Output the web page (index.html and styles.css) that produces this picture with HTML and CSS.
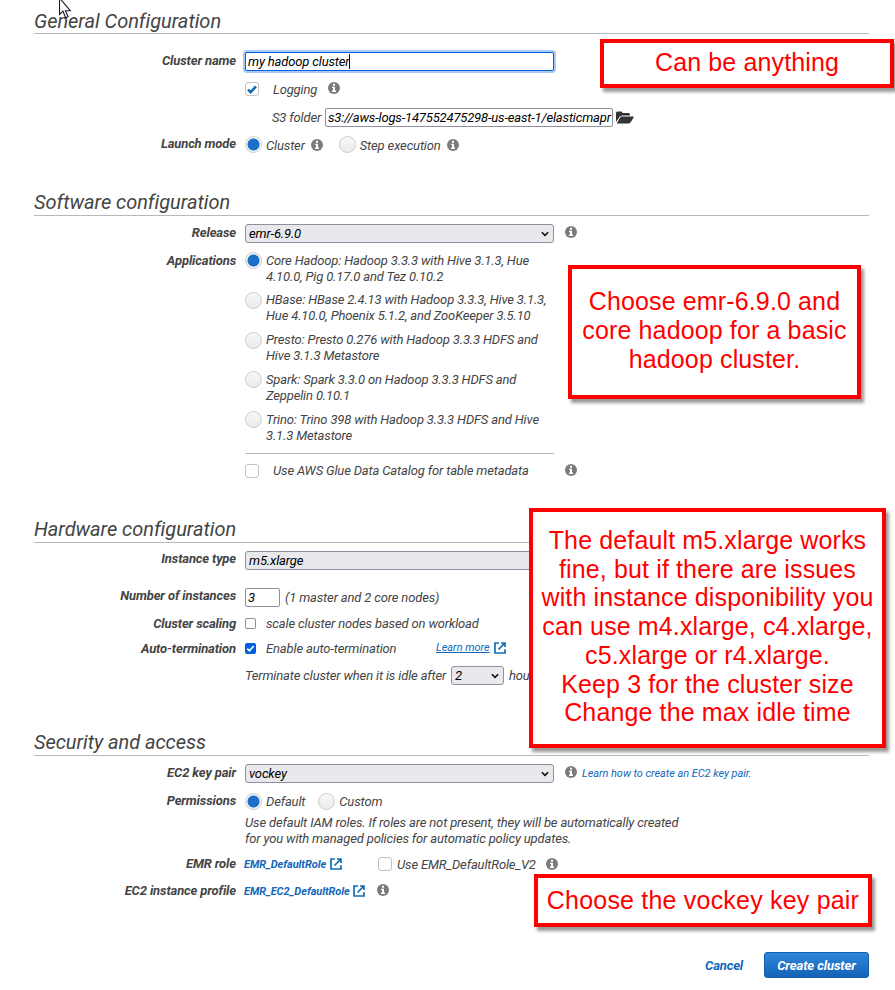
FILE: index.html
```
<!DOCTYPE html>
<html lang="en">
<head>
<meta charset="utf-8">
<title>Create Cluster</title>
<link rel="stylesheet" href="styles.css">
</head>
<body>
<svg class="defs" width="0" height="0">
  <symbol id="info" viewBox="0 0 12 12"><circle cx="6" cy="6" r="6" fill="#7b7b7b"/><path d="M5 1.8h2v1.9H5zM4 4.700h3v3.700h1v1.500H4V8.400h1V6H4z" fill="#fff"/></symbol>
  <symbol id="ext" viewBox="0 0 12 12"><path d="M5 1H1v10h10V7.300M7 1h4v4M10.800 1.200L4.500 7.500" fill="none" stroke="#146eb4" stroke-width="1.7"/></symbol>
  <symbol id="chev" viewBox="0 0 8 6"><path d="M.8 1.200L4 4.400l3.200-3.200" fill="none" stroke="#111" stroke-width="1.600"/></symbol>
</svg>
<main class="page">
  <section>
    <h2 class="first">General Configuration</h2>
    <div class="row r-name"><label class="up">Cluster name</label><div class="field"><div class="input wide focused">my hadoop cluster<i class="caret"></i></div></div></div>
    <div class="row short"><label></label><div class="field"><span class="check"><svg width="10" height="9" viewBox="0 0 10 9"><path d="M1 4.600l2.600 2.600L9 1.400" fill="none" stroke="#146eb4" stroke-width="2.600"/></svg></span><span class="check-text">Logging</span><svg class="info info-log"><use href="#info"/></svg></div></div>
    <div class="row r-s3"><label></label><div class="field"><span class="s3-text">S3 folder</span><div class="input s3-input">s3://aws-logs-147552475298-us-east-1/elasticmapr</div><svg class="folder" viewBox="0 0 18 13"><path d="M0 11V2Q0 .5 1.500.5h3.700Q6.500.5 6.500 2h6Q14 2 14 3.500v1H6.200Q4.500 4.500 3.500 6z" fill="#333"/><path d="M.7 12.500L4.200 6.600Q4.800 5.600 6 5.600h11q1.300 0 .5 1.100l-3 4.700q-.7 1.100-2 1.100z" fill="#333"/></svg></div></div>
    <div class="row r-launch"><label class="up">Launch mode</label><div class="field"><span class="radio on"></span><span class="radio-text">Cluster</span><svg class="info after"><use href="#info"/></svg><span class="radio second-launch"></span><span class="radio-text">Step execution</span><svg class="info after"><use href="#info"/></svg></div></div>
  </section>
  <section class="software">
    <h2>Software configuration</h2>
    <div class="row r-select"><label class="up">Release</label><div class="field"><div class="select wide">emr-6.9.0<svg class="chev"><use href="#chev"/></svg></div><svg class="info far"><use href="#info"/></svg></div></div>
    <div class="row r-apps"><label>Applications</label>
      <div class="apps">
        <div class="app"><span class="radio on"></span><span class="app-text">Core Hadoop: Hadoop 3.3.3 with Hive 3.1.3, Hue<br>4.10.0, Pig 0.17.0 and Tez 0.10.2</span></div>
        <div class="app"><span class="radio"></span><span class="app-text">HBase: HBase 2.4.13 with Hadoop 3.3.3, Hive 3.1.3,<br>Hue 4.10.0, Phoenix 5.1.2, and ZooKeeper 3.5.10</span></div>
        <div class="app"><span class="radio"></span><span class="app-text">Presto: Presto 0.276 with Hadoop 3.3.3 HDFS and<br>Hive 3.1.3 Metastore</span></div>
        <div class="app"><span class="radio"></span><span class="app-text">Spark: Spark 3.3.0 on Hadoop 3.3.3 HDFS and<br>Zeppelin 0.10.1</span></div>
        <div class="app"><span class="radio"></span><span class="app-text">Trino: Trino 398 with Hadoop 3.3.3 HDFS and Hive<br>3.1.3 Metastore</span></div>
      </div>
    </div>
    <div class="row short glue"><label></label><div class="field"><span class="check"></span><span class="check-text glue-text">Use AWS Glue Data Catalog for table metadata</span><svg class="info far-glue"><use href="#info"/></svg></div></div>
  </section>
  <section class="hardware">
    <h2>Hardware configuration</h2>
    <div class="row r-select"><label class="up more-up">Instance type</label><div class="field"><div class="select wide">m5.xlarge<svg class="chev"><use href="#chev"/></svg></div></div></div>
    <div class="row r-count"><label class="up more-up">Number of instances</label><div class="field"><div class="input count">3</div><span class="count-text">(1 master and 2 core nodes)</span></div></div>
    <div class="row r-scale"><label>Cluster scaling</label><div class="field"><span class="box"></span><span class="box-text">scale cluster nodes based on workload</span></div></div>
    <div class="row r-auto"><label>Auto-termination</label><div class="field"><span class="box on"><svg width="11" height="11" viewBox="0 0 11 11"><path d="M2.300 5.600l2.200 2.200 4.200-4.800" fill="none" stroke="#fff" stroke-width="1.700"/></svg></span><span class="box-text auto-text">Enable auto-termination</span><a class="more">Learn more</a><svg class="ext up"><use href="#ext"/></svg></div></div>
    <div class="row r-idle"><label></label><div class="field"><span class="idle-text">Terminate cluster when it is idle after</span><div class="select hours">2<svg class="chev"><use href="#chev"/></svg></div><span class="hours-text">hours</span></div></div>
  </section>
  <section class="security">
    <h2>Security and access</h2>
    <div class="row r-select"><label class="up">EC2 key pair</label><div class="field"><div class="select wide">vockey<svg class="chev"><use href="#chev"/></svg></div><svg class="info far"><use href="#info"/></svg><a class="small key-link">Learn how to create an EC2 key pair.</a></div></div>
    <div class="row r-perm"><label class="up">Permissions</label><div class="field"><span class="radio on"></span><span class="radio-text perm-text">Default</span><span class="radio second-perm"></span><span class="radio-text perm-text">Custom</span></div></div>
    <div class="row r-note"><label></label><div class="note">Use default IAM roles. If roles are not present, they will be automatically created<br>for you with managed policies for automatic policy updates.</div></div>
    <div class="row short r-role"><label>EMR role</label><div class="field"><a class="small strong role-link">EMR_DefaultRole</a><svg class="ext"><use href="#ext"/></svg><span class="check v2"></span><span class="v2-text">Use EMR_DefaultRole_V2</span><svg class="info v2-info"><use href="#info"/></svg></div></div>
    <div class="row short r-role"><label>EC2 instance profile</label><div class="field"><a class="small strong profile-link">EMR_EC2_DefaultRole</a><svg class="ext"><use href="#ext"/></svg><svg class="info profile-info"><use href="#info"/></svg></div></div>
  </section>
  <footer><a class="cancel">Cancel</a><button>Create cluster</button></footer>
</main>
<aside class="callout c-name">Can be anything</aside>
<aside class="callout c-release">Choose emr-6.9.0 and<br>core hadoop for a basic<br>hadoop cluster.</aside>
<aside class="callout c-hardware">The default m5.xlarge works<br>fine, but if there are issues<br>with instance disponibility you<br>can use m4.xlarge, c4.xlarge,<br>c5.xlarge or r4.xlarge.<br>Keep 3 for the cluster size<br>Change the max idle time</aside>
<aside class="callout c-key">Choose the vockey key pair</aside>
<svg class="cursor" width="13" height="20" viewBox="0 0 13 20"><path d="M.5-2v16.500l3.500-3.300 2.600 6.500 2.500-1-2.600-6h4.800z" fill="#fff" stroke="#111827" stroke-width="1.100"/></svg>
</body>
</html>
```
FILE: styles.css
```
* { box-sizing: border-box; }
body {
  margin: 0;
  width: 895px;
  height: 990px;
  position: relative;
  overflow: hidden;
  background: #fff;
  color: #444;
  font: italic 13px/16px Roboto, "Liberation Sans", sans-serif;
  letter-spacing: -.15px;
  white-space: nowrap;
}
svg { display: block; flex: none; }
.defs { position: absolute; }
.page { padding: 0 26px 0 34px; }
h2 {
  margin: 0;
  height: 34px;
  padding-top: 8px;
  border-bottom: 1px solid #b8b8b8;
  font-size: 20px;
  line-height: 25px;
  font-weight: 400;
  letter-spacing: -.04px;
}
h2.first { padding-top: 9px; line-height: 24px; }
.software { margin-top: 27px; }
.hardware { margin-top: 28px; }
.security { margin-top: 36px; }
.row {
  display: grid;
  grid-template-columns: 202px 1fr;
  column-gap: 9px;
  align-items: center;
  height: 21px;
}
.row.short { height: 20px; }
.row > label { text-align: right; font-weight: 700; letter-spacing: -.13px; }
.row > label.up { padding-bottom: 2px; }
.row > label.more-up { padding-bottom: 4px; }
.field { display: flex; align-items: center; }
.r-name { margin-top: 17px; }
.r-name + .short { margin-top: 7px; }
.r-s3 { margin-top: 8px; }
.r-launch { margin-top: 6px; }
.r-select { margin-top: 7px; }
.row.r-apps { margin-top: 8px; height: 199px; align-items: start; }
.r-apps > label { padding-top: 1px; }
.row.glue { margin-top: 10px; }
.r-count { margin-top: 16px; }
.r-scale { margin-top: 5px; }
.r-auto { margin-top: 4px; }
.r-idle { margin-top: 6px; }
.r-perm { margin-top: 7px; }
.row.r-note { margin-top: 3px; height: 32px; }
.r-role { margin-top: 7px; }

.input, .select {
  height: 19px;
  border: 1px solid #8f8f9d;
  border-radius: 2px;
  padding: 0 2px;
  line-height: 18px;
  color: #000;
  background: #fff;
}
.select {
  display: flex;
  justify-content: space-between;
  align-items: center;
  border-radius: 3px;
  background: #e9e9ed;
  padding: 0 4px 0 3px;
}
.wide { width: 309px; }
.chev { width: 8px; height: 6px; }
.focused {
  display: flex;
  align-items: center;
  border-color: #0060df;
  box-shadow: 0 0 0 2px #a9c9f4;
}
.caret { width: 1px; height: 15px; background: #000; }
.s3-text { margin-left: 27px; width: 53px; }
.s3-input { width: 288px; letter-spacing: -.17px; }
.folder { width: 18px; height: 13px; margin-left: 3px; }
.check {
  flex: none;
  display: flex;
  align-items: center;
  justify-content: center;
  width: 14px;
  height: 14px;
  border: 1px solid #c4c4c4;
  border-radius: 3px;
  background: #fff;
}
.check-text { margin-left: 14px; width: 55px; padding-top: 1px; }
.glue-text { width: 292px; padding: 0 0 1px; }
.info { width: 12px; height: 12px; margin-bottom: 2px; }
.info.after { margin: 1px 0 0 6px; }
.info.far { margin-left: 11px; margin-bottom: 3px; }
.radio {
  flex: none;
  width: 17px;
  height: 17px;
  border: 1px solid #ccc;
  border-radius: 50%;
  background: linear-gradient(#f7f7f7, #ebebeb);
}
.radio.on { background: radial-gradient(circle, #1a6fc9 0 5.600px, #f4f4f4 6.400px); }
.radio-text { margin-left: 4px; padding-top: 2px; }
.perm-text { padding-top: 1px; }
.second-launch { margin-left: 16px; }
.second-perm { margin-left: 13px; }
.apps { width: 309px; height: 202px; border-bottom: 1px solid #b8b8b8; }
.app { display: flex; gap: 4px; height: 39.8px; }
.app-text { padding-top: .5px; }
.count { width: 35px; }
.count-text { margin-left: 5px; }
.box {
  flex: none;
  width: 11px;
  height: 11px;
  border: 1px solid #8f8f9d;
  border-radius: 2px;
}
.box.on { border: 0; background: #0060df; }
.box-text { margin-left: 10px; }
.auto-text { width: 170px; }
a { color: #1166bb; }
.more { width: 54px; font-size: 11px; letter-spacing: -.04px; text-decoration: underline; margin-bottom: 2px; }
.ext { width: 12px; height: 12px; margin-left: 4px; }
.ext.up { margin-bottom: 2px; }
.idle-text { width: 201px; }
.hours { width: 53px; margin-left: 5px; }
.hours-text { margin-left: 5px; }
.small { font-size: 11px; letter-spacing: -.06px; }
.strong { font-weight: 700; padding-top: 1px; }
.key-link { margin-left: 5px; }
.role-link { width: 82px; margin-left: -1px; }
.profile-link { width: 105px; margin-left: -1px; }
.v2 { margin-left: 36px; }
.v2-text { margin-left: 5px; width: 139px; padding-top: 1px; }
.v2-info { margin-left: 10px; margin-bottom: 0; }
.profile-info { margin-left: 12px; }
footer {
  display: flex;
  align-items: center;
  justify-content: flex-end;
  gap: 21px;
  height: 26px;
  margin-top: 51px;
  font-weight: 700;
}
.cancel { padding-top: 2px; }
button {
  width: 105px;
  height: 26px;
  padding: 2px 0 0;
  border: 1px solid #1460ae;
  border-radius: 3px;
  background: linear-gradient(#2f86dc, #1463b5);
  color: #fff;
  font: inherit;
  letter-spacing: -.08px;
}
.callout {
  position: absolute;
  display: flex;
  align-items: center;
  justify-content: center;
  border: 4px solid #f00;
  background: #fff;
  box-shadow: 3px 4px 3px rgba(0, 0, 0, .4);
  color: #f00;
  font: 25px/28.800px "Liberation Sans", Arial, sans-serif;
  letter-spacing: .13px;
  text-align: center;
}
.c-name { left: 600px; top: 39px; width: 294px; height: 49px; padding-bottom: 2px; }
.c-release { left: 568px; top: 265px; width: 293px; height: 134px; padding-bottom: 3px; }
.c-hardware { left: 529px; top: 508px; width: 357px; height: 240px; padding-bottom: 3px; }
.c-key { left: 534px; top: 874px; width: 338px; height: 53px; padding-bottom: 1px; letter-spacing: .2px; }
.cursor { position: absolute; left: 59px; top: 0; }
```
